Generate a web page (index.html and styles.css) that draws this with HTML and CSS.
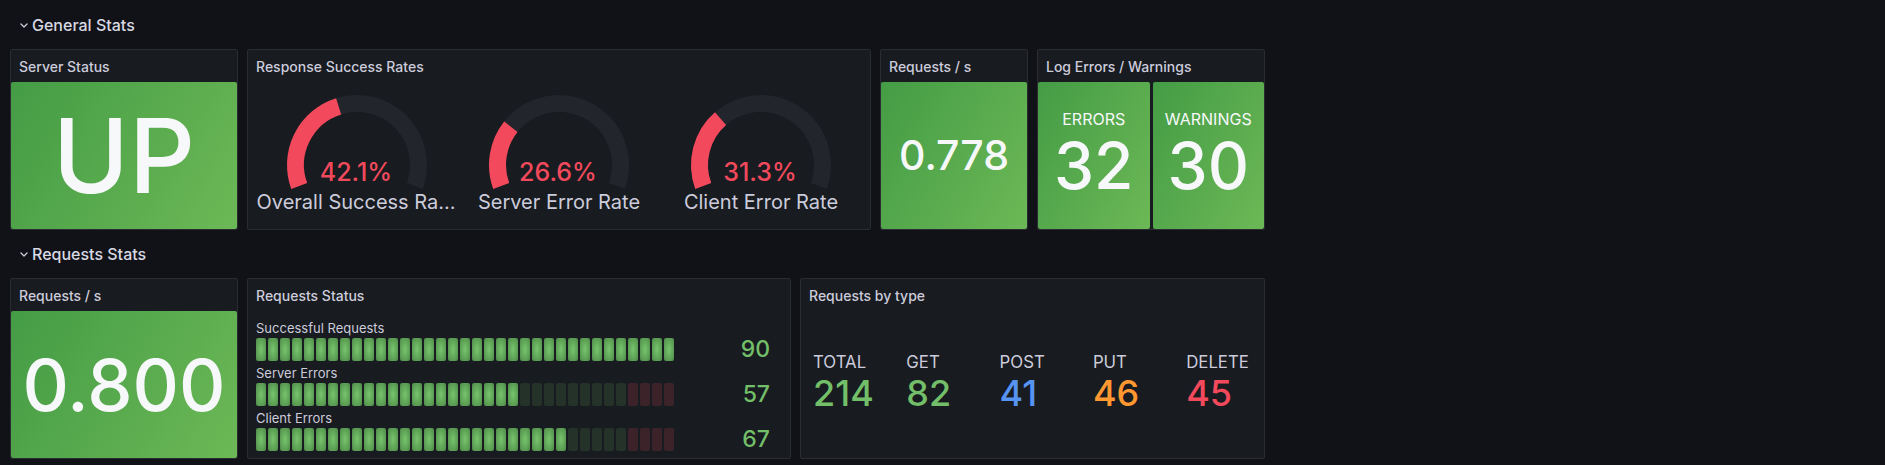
FILE: index.html
```html
<!DOCTYPE html>
<html lang="en">
<head>
<meta charset="utf-8">
<title>Dashboard</title>
<link rel="stylesheet" href="styles.css">
</head>
<body>
<div class="dashboard">
  <div class="row-header">
    <svg class="chevron" width="8" height="8" viewBox="0 0 8 8"><path d="M1 3 L4 6 L7 3"/></svg>
    <span>General Stats</span>
  </div>
  <div class="panel-row r1">
    <section class="panel">
      <header class="panel-header">Server Status</header>
      <div class="panel-body">
        <div class="stat"><span class="value v-up">UP</span></div>
      </div>
    </section>
    <section class="panel">
      <header class="panel-header">Response Success Rates</header>
      <div class="panel-body gauges">
        <div class="gauge">
          <svg class="gauge-svg" width="202" height="108" viewBox="0 0 202 108">
            <path class="track" d="M43.21 104.03 A61.5 61.5 0 1 1 158.79 104.03"/>
            <path class="fill" d="M43.21 104.03 A61.5 61.5 0 0 1 82.64 24.30"/>
            <text class="gauge-value" x="100" y="99">42.1%</text>
          </svg>
          <div class="gauge-label truncated" title="Overall Success Rate">Overall Success Ra...</div>
        </div>
        <div class="gauge">
          <svg class="gauge-svg" width="202" height="108" viewBox="0 0 202 108">
            <path class="track" d="M43.21 104.03 A61.5 61.5 0 1 1 158.79 104.03"/>
            <path class="fill" d="M43.21 104.03 A61.5 61.5 0 0 1 52.87 44.71"/>
            <text class="gauge-value" x="100" y="99">26.6%</text>
          </svg>
          <div class="gauge-label">Server Error Rate</div>
        </div>
        <div class="gauge">
          <svg class="gauge-svg" width="202" height="108" viewBox="0 0 202 108">
            <path class="track" d="M43.21 104.03 A61.5 61.5 0 1 1 158.79 104.03"/>
            <path class="fill" d="M43.21 104.03 A61.5 61.5 0 0 1 60.51 36.71"/>
            <text class="gauge-value" x="100" y="99">31.3%</text>
          </svg>
          <div class="gauge-label">Client Error Rate</div>
        </div>
      </div>
    </section>
    <section class="panel">
      <header class="panel-header">Requests / s</header>
      <div class="panel-body">
        <div class="stat"><span class="value v-rate1">0.778</span></div>
      </div>
    </section>
    <section class="panel">
      <header class="panel-header">Log Errors / Warnings</header>
      <div class="panel-body split">
        <div class="stat labeled"><span class="stat-label">ERRORS</span><span class="value v-count">32</span></div>
        <div class="stat labeled"><span class="stat-label">WARNINGS</span><span class="value v-count">30</span></div>
      </div>
    </section>
  </div>

  <div class="row-header">
    <svg class="chevron" width="8" height="8" viewBox="0 0 8 8"><path d="M1 3 L4 6 L7 3"/></svg>
    <span>Requests Stats</span>
  </div>
  <div class="panel-row r2">
    <section class="panel">
      <header class="panel-header">Requests / s</header>
      <div class="panel-body">
        <div class="stat"><span class="value v-rate2">0.800</span></div>
      </div>
    </section>
    <section class="panel">
      <header class="panel-header">Requests Status</header>
      <div class="panel-body bars">
        <div class="bar-row">
          <div class="bar-label">Successful Requests</div>
          <div class="cells">
            <i class="on"></i><i class="on"></i><i class="on"></i><i class="on"></i><i class="on"></i><i class="on"></i><i class="on"></i><i class="on"></i><i class="on"></i><i class="on"></i>
            <i class="on"></i><i class="on"></i><i class="on"></i><i class="on"></i><i class="on"></i><i class="on"></i><i class="on"></i><i class="on"></i><i class="on"></i><i class="on"></i>
            <i class="on"></i><i class="on"></i><i class="on"></i><i class="on"></i><i class="on"></i><i class="on"></i><i class="on"></i><i class="on"></i><i class="on"></i><i class="on"></i>
            <i class="on"></i><i class="on"></i><i class="on"></i><i class="on"></i><i class="on"></i>
          </div>
          <div class="bar-value">90</div>
        </div>
        <div class="bar-row">
          <div class="bar-label">Server Errors</div>
          <div class="cells">
            <i class="on"></i><i class="on"></i><i class="on"></i><i class="on"></i><i class="on"></i><i class="on"></i><i class="on"></i><i class="on"></i><i class="on"></i><i class="on"></i>
            <i class="on"></i><i class="on"></i><i class="on"></i><i class="on"></i><i class="on"></i><i class="on"></i><i class="on"></i><i class="on"></i><i class="on"></i><i class="on"></i>
            <i class="on"></i><i class="on"></i><i class="off"></i><i class="off"></i><i class="off"></i><i class="off"></i><i class="off"></i><i class="off"></i><i class="off"></i><i class="off"></i>
            <i class="off"></i><i class="red"></i><i class="red"></i><i class="red"></i><i class="red"></i>
          </div>
          <div class="bar-value">57</div>
        </div>
        <div class="bar-row">
          <div class="bar-label">Client Errors</div>
          <div class="cells">
            <i class="on"></i><i class="on"></i><i class="on"></i><i class="on"></i><i class="on"></i><i class="on"></i><i class="on"></i><i class="on"></i><i class="on"></i><i class="on"></i>
            <i class="on"></i><i class="on"></i><i class="on"></i><i class="on"></i><i class="on"></i><i class="on"></i><i class="on"></i><i class="on"></i><i class="on"></i><i class="on"></i>
            <i class="on"></i><i class="on"></i><i class="on"></i><i class="on"></i><i class="on"></i><i class="on"></i><i class="off"></i><i class="off"></i><i class="off"></i><i class="off"></i>
            <i class="off"></i><i class="red"></i><i class="red"></i><i class="red"></i><i class="red"></i>
          </div>
          <div class="bar-value">67</div>
        </div>
      </div>
    </section>
    <section class="panel">
      <header class="panel-header">Requests by type</header>
      <div class="panel-body types">
        <div class="type"><span class="type-label">TOTAL</span><span class="type-value green">214</span></div>
        <div class="type"><span class="type-label">GET</span><span class="type-value green">82</span></div>
        <div class="type"><span class="type-label">POST</span><span class="type-value blue">41</span></div>
        <div class="type"><span class="type-label">PUT</span><span class="type-value orange">46</span></div>
        <div class="type"><span class="type-label">DELETE</span><span class="type-value red-text">45</span></div>
      </div>
    </section>
  </div>
</div>
</body>
</html>
```

FILE: styles.css
```css
html, body {
  margin: 0;
  padding: 0;
  background: #111217;
}

body {
  font-family: Inter, "Noto Sans", "Liberation Sans", sans-serif;
  color: #ccccdc;
  width: 1885px;
  height: 465px;
  overflow: hidden;
}

.dashboard {
  width: 1255px;
  padding: 1px 0 0 10px;
}

.row-header {
  height: 48px;
  display: flex;
  align-items: center;
  gap: 4px;
  padding-left: 10px;
  font-size: 16px;
  font-weight: 500;
  color: #d8d9e3;
}

.chevron path {
  fill: none;
  stroke: #ccccdc;
  stroke-width: 1.3;
  stroke-linecap: round;
  stroke-linejoin: round;
}

.panel-row {
  display: grid;
  column-gap: 9px;
  height: 181px;
}

.r1 {
  grid-template-columns: 228px 624px 148px 228px;
}

.r2 {
  grid-template-columns: 228px 544px 465px;
}

.panel {
  box-sizing: border-box;
  height: 181px;
  display: flex;
  flex-direction: column;
  background: #181b1f;
  border: 1px solid #2a2c32;
  border-radius: 2px;
  overflow: hidden;
}

.panel-header {
  flex: none;
  height: 32px;
  display: flex;
  align-items: center;
  padding: 0 8px;
  font-size: 14px;
  font-weight: 500;
  color: #ccccdc;
}

.panel-body {
  flex: 1;
  min-height: 0;
  display: flex;
}

/* stat */
.stat {
  flex: 1;
  display: flex;
  flex-direction: column;
  align-items: center;
  justify-content: center;
  background: linear-gradient(120deg, #449c45, #6cb856);
  border-radius: 2px;
  color: #f7f8fa;
}

.split {
  gap: 3px;
}

.labeled {
  padding-bottom: 4px;
}

.value {
  font-weight: 500;
  line-height: 1;
}

.v-up {
  font-size: 103px;
}

.v-rate1 {
  font-size: 41px;
}

.v-rate2 {
  font-size: 72px;
}

.v-count {
  font-size: 64px;
  margin-top: 5px;
}

.stat-label {
  font-size: 16px;
  line-height: 19px;
}

/* gauges */
.gauges {
  display: grid;
  grid-template-columns: repeat(3, 1fr);
  padding: 0 8px;
}

.gauge {
  min-width: 0;
  display: flex;
  flex-direction: column;
  align-items: center;
}

.gauge-svg {
  display: block;
  overflow: visible;
}

.track {
  fill: none;
  stroke: #22252b;
  stroke-width: 17;
}

.fill {
  fill: none;
  stroke: #f2495c;
  stroke-width: 17;
}

.gauge-value {
  fill: #f2495c;
  font-family: Inter, "Noto Sans", sans-serif;
  font-size: 25px;
  font-weight: 500;
  text-anchor: middle;
}

.gauge-label {
  width: 100%;
  font-size: 20px;
  line-height: 24px;
  text-align: center;
  white-space: nowrap;
  overflow: hidden;
  text-overflow: ellipsis;
  color: #ccccdc;
}

.gauge-label.truncated {
  text-align: left;
  padding-left: 1px;
}

/* bar gauge */
.bars {
  flex-direction: column;
  padding: 9px 8px 0;
}

.bar-row {
  display: grid;
  grid-template-columns: 418px 1fr;
  grid-template-rows: 16px 23px;
  row-gap: 2px;
  margin-bottom: 4px;
}

.bar-label {
  grid-column: 1;
  grid-row: 1;
  font-size: 13px;
  line-height: 16px;
  color: #ccccdc;
}

.cells {
  grid-column: 1;
  grid-row: 2;
  display: flex;
  gap: 2px;
}

.cells i {
  display: block;
  width: 10px;
  height: 23px;
  border-radius: 2px;
}

.cells .on {
  background: radial-gradient(#73bf69 10%, #4d8a48);
}

.cells .off {
  background: rgba(115, 191, 105, 0.14);
}

.cells .red {
  background: rgba(242, 73, 92, 0.17);
}

.bar-value {
  grid-column: 2;
  grid-row: 2;
  align-self: center;
  text-align: right;
  padding-right: 12px;
  font-size: 23px;
  line-height: 23px;
  font-weight: 500;
  color: #73bf69;
}

/* requests by type */
.types {
  display: grid;
  grid-template-columns: repeat(5, 93.3px);
  align-content: center;
  padding: 0 0 4px 12px;
}

.type {
  display: flex;
  flex-direction: column;
}

.type-label {
  font-size: 16.8px;
  line-height: 19px;
  color: #ccccdc;
}

.type-value {
  font-size: 36px;
  line-height: 40px;
  font-weight: 500;
  margin-top: 1px;
}

.green { color: #73bf69; }
.blue { color: #5794f2; }
.orange { color: #ff9830; }
.red-text { color: #f2495c; }
```
